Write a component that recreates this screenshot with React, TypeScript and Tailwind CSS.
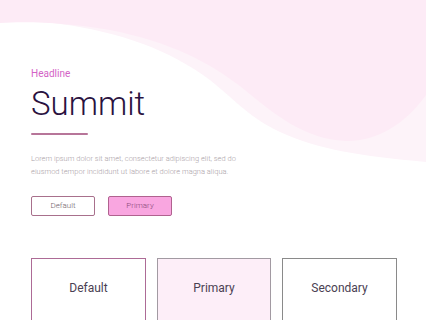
import React from 'react'

// Soft pink wave behind the hero, two layers
function Wave() {
  return (
    <svg className="absolute inset-0 w-full h-full" viewBox="0 0 426 320" preserveAspectRatio="none">
      <path
        d="M0 0 H426 V162 C360 156 320 150 280 132 C250 118 235 100 210 80 C170 50 120 32 60 24 C35 21 15 21 0 23 Z"
        fill="#fdf3f9"
      />
      <path
        d="M0 0 H426 V95 C405 125 375 142 345 141 C305 139 275 115 245 90 C210 62 170 42 110 30 C70 23 30 21 0 23 Z"
        fill="#fdebf6"
      />
    </svg>
  )
}

const buttonBase = 'w-[64px] h-[20px] text-[8px] border-[1.5px] rounded-[2px] flex items-center justify-center'
const cardBase = 'h-[90px] border-[1.5px] flex justify-center pt-[20px] text-[12px] text-[#4a4152]'

export default function App() {
  return (
    <div className="relative w-[426px] h-[320px] overflow-hidden bg-white" style={{ fontFamily: 'Roboto, "Liberation Sans", sans-serif' }}>
      <Wave />
      <div className="relative flex flex-col pl-[31px] pt-[67px]">
        <div className="text-[10px] text-[#d363c6] leading-[14px]">Headline</div>
        <div className="mt-[5px] text-[33px] font-light text-[#2a1240] leading-[36px]">Summit</div>
        <div className="mt-[11px] w-[57px] h-[2px] bg-[#b77599] rounded-full" />
        <div className="mt-[17px] text-[7.5px] leading-[13px] text-[#aaa1a7] font-light">
          <div>Lorem ipsum dolor sit amet, consectetur adipiscing elit, sed do</div>
          <div>eiusmod tempor incididunt ut labore et dolore magna aliqua.</div>
        </div>
        <div className="mt-[18px] flex gap-[13px]">
          <div className={`${buttonBase} bg-white border-[#a8708c] text-[#6f6068] font-light`}>Default</div>
          <div className={`${buttonBase} bg-[#f9a6e0] border-[#b0628f] text-[#8a4a7a] font-light`}>Primary</div>
        </div>
        <div className="mt-[42px] flex gap-[11px]">
          <div className={`${cardBase} w-[115px] border-[#ad6b96] bg-white`}>Default</div>
          <div className={`${cardBase} w-[114px] border-[#a29aa2] bg-[#fdeef8]`}>Primary</div>
          <div className={`${cardBase} w-[115px] border-[#8a8a8a] bg-white`}>Secondary</div>
        </div>
      </div>
    </div>
  )
}
